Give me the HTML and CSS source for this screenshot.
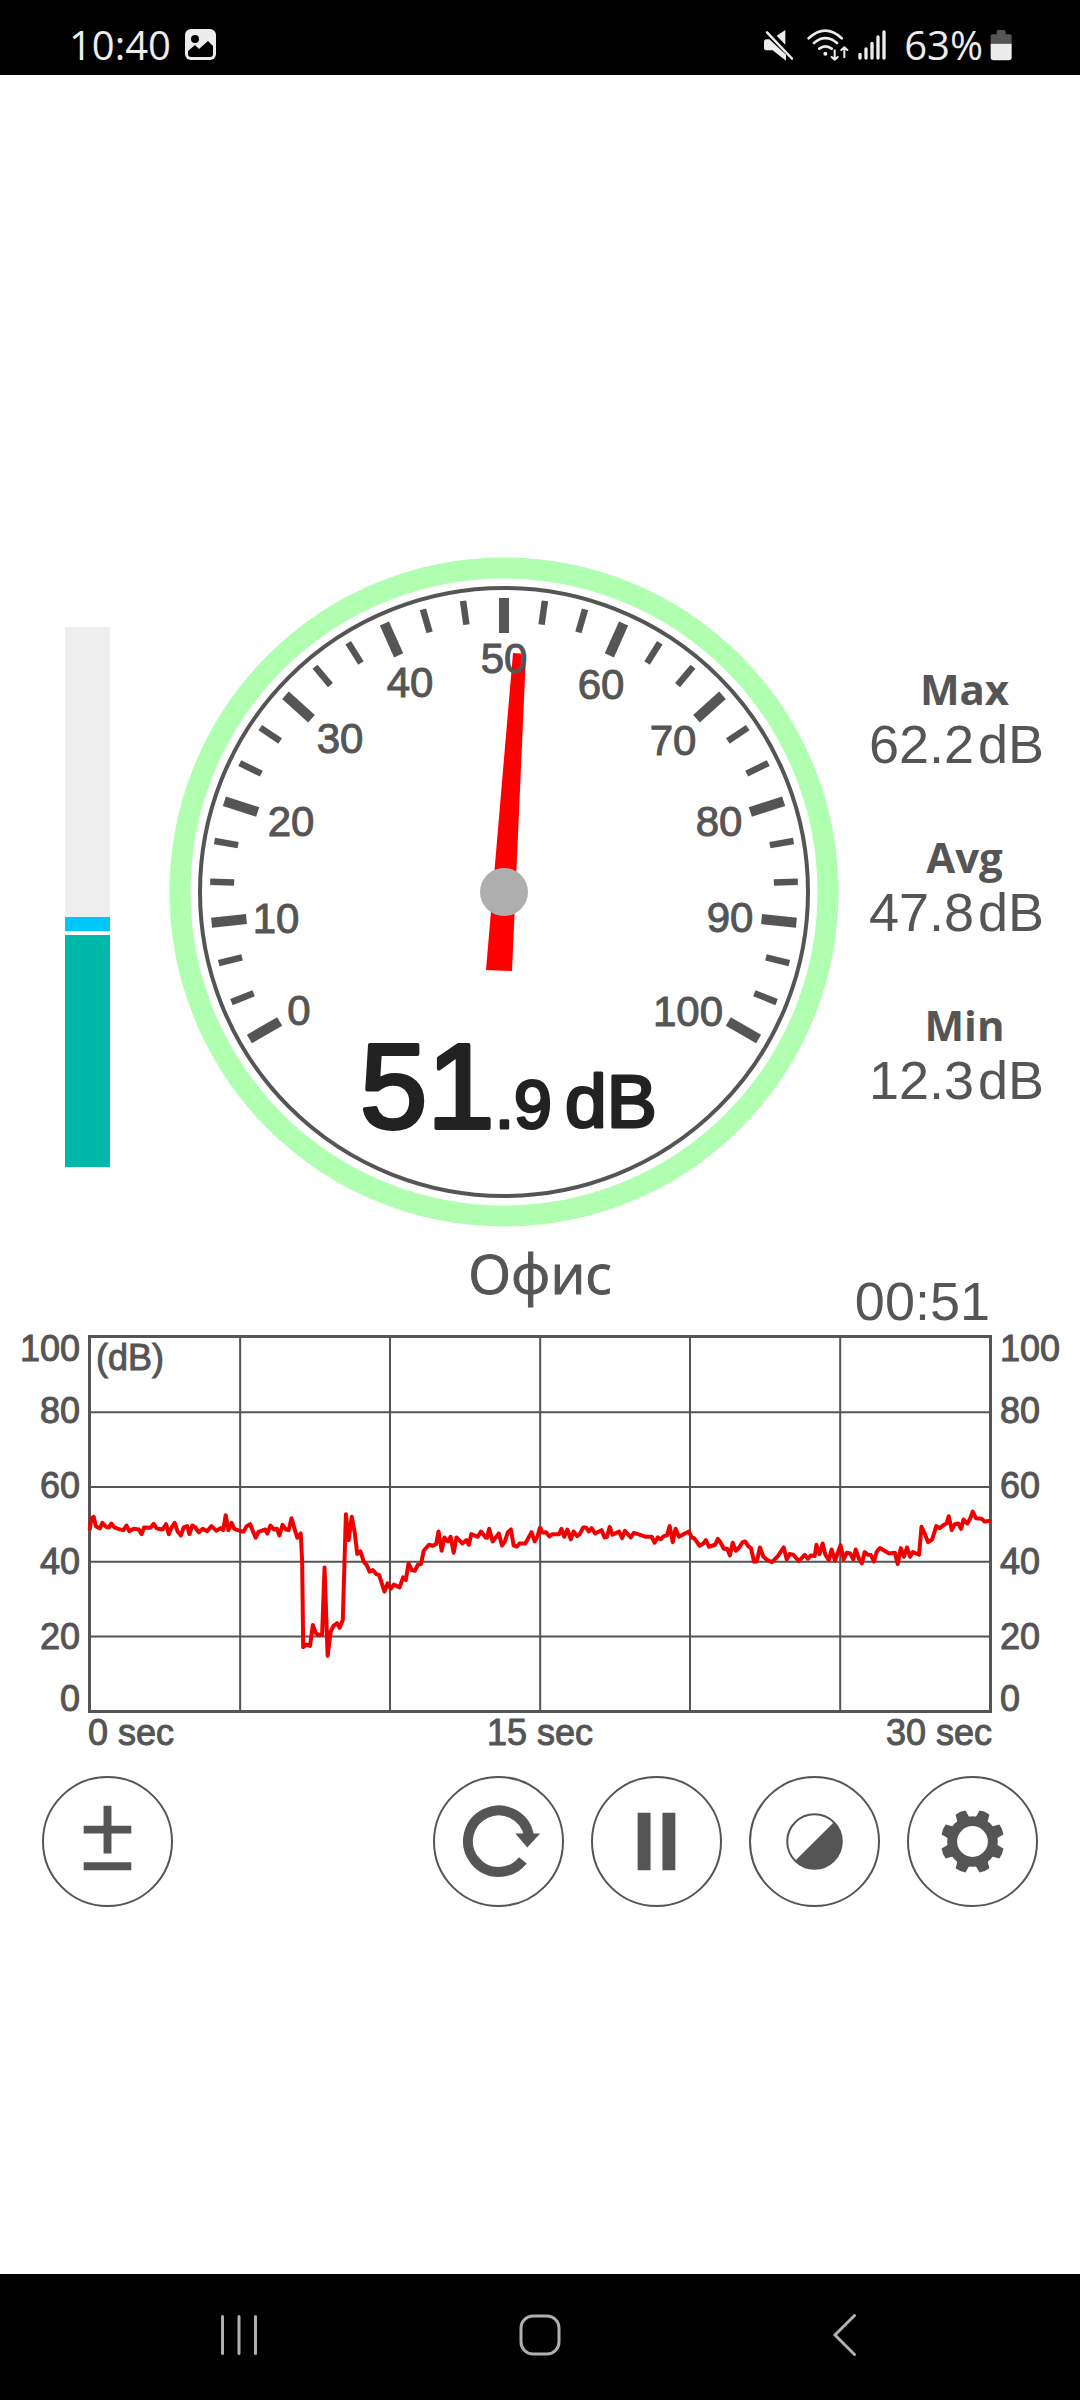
FILE: index.html
```html
<!DOCTYPE html>
<html lang="ru">
<head>
  <meta charset="UTF-8">
  <meta name="viewport" content="width=device-width, initial-scale=1.0">
  <title>Sound Meter</title>
  <link rel="stylesheet" href="styles.css">
</head>
<body>
  <header class="status-bar">
    <div class="status-left">
      <span>10:40</span>
      <svg width="31" height="32" viewBox="0 0 31 32">
        <rect width="31" height="31" rx="6" fill="#ececec"/>
        <circle cx="10" cy="10" r="4"/>
        <path d="M3 22l7-6 4 4 9-8 5 5v8q0 3-3 3H6q-3 0-3-3z"/>
      </svg>
    </div>
    <div class="status-right">
      <!-- sound off -->
      <svg width="30" height="32" viewBox="192 88 90 96" fill="#ececec">
        <path d="M230 108L256 91V135zM200 119H208L258 165V183L218 152H200Q192 152 192 145V127Q192 119 200 119z"/>
        <path d="M201 98L276 177" stroke="#ececec" stroke-width="7" stroke-linecap="round"/>
      </svg>
      <!-- wifi -->
      <svg class="icon-wifi" width="42" height="32" viewBox="320 88 126 96" fill="none" stroke="#ececec" stroke-width="8" stroke-linecap="round" stroke-linejoin="round">
        <path d="M325 116Q375 70 424 116M341 130Q375 101 410 130M357 147Q375 133 394 147"/>
        <path d="M403 152V180M394 172L403 180L412 172M432 173V143M423 151L432 143L441 151" stroke-width="6"/>
        <circle cx="375" cy="162" r="6" fill="#ececec" stroke="none"/>
      </svg>
      <!-- signal -->
      <svg class="icon-signal" width="28" height="32" viewBox="474 88 84 96" stroke="#ececec" stroke-width="10" stroke-linecap="round">
        <path d="M480 164V175M498 148V175M516 131V175M534 112V175M552 97V175"/>
      </svg>
      <span>63%</span>
      <svg class="icon-battery" width="22" height="32" viewBox="868 88 66 96">
        <path d="M888 104V96Q888 91 893 91H910Q915 91 915 96V104H928Q933 104 933 109V132H870V109Q870 104 875 104z" fill="#555"/>
        <path d="M870 132H933V173Q933 182 924 182H879Q870 182 870 173z" fill="#ececec"/>
      </svg>
    </div>
  </header>

  <main class="app">
    <section class="meter">
      <div class="level">
        <div class="level-peak"></div>
        <div class="level-fill"></div>
      </div>

      <svg class="gauge" viewBox="169 557 670 670">
        <circle cx="504" cy="892" r="324" fill="none" stroke="#b0ffb0" stroke-width="21"/>
        <circle cx="504" cy="892" r="304" fill="none" stroke="#555" stroke-width="4"/>
        <g id="ticks" stroke="#555"></g>
        <path d="M513 653L526 654L512 971L486 970z" fill="red"/>
        <circle cx="504" cy="892" r="24" fill="#aeaeae"/>
        <g class="gauge-numbers">
          <text x="299" y="1025">0</text>
          <text x="276" y="933">10</text>
          <text x="291" y="836">20</text>
          <text x="340" y="753">30</text>
          <text x="410" y="697">40</text>
          <text x="504" y="673">50</text>
          <text x="601" y="699">60</text>
          <text x="673" y="755">70</text>
          <text x="719" y="836">80</text>
          <text x="730" y="932">90</text>
          <text x="688" y="1026">100</text>
        </g>
        <g class="gauge-value">
          <text class="value-int" x="360" y="1128">51</text>
          <text class="value-frac" x="495" y="1128">.</text>
          <text class="value-frac" x="514" y="1128">9</text>
          <text class="value-unit" x="565" y="1127">dB</text>
        </g>
      </svg>

      <dl class="stats">
        <div class="stat">
          <dt>Max</dt>
          <dd>62.2<span>dB</span></dd>
        </div>
        <div class="stat">
          <dt>Avg</dt>
          <dd>47.8<span>dB</span></dd>
        </div>
        <div class="stat">
          <dt>Min</dt>
          <dd>12.3<span>dB</span></dd>
        </div>
      </dl>
    </section>

    <section class="caption">
      <h1>Офис</h1>
      <div class="timer">00:51</div>
    </section>

    <section class="chart">
      <div class="y-axis y-left">
        <span>100</span><span>80</span><span>60</span><span>40</span><span>20</span><span>0</span>
      </div>
      <div class="plot">
        <span class="plot-unit">(dB)</span>
        <svg viewBox="264 292 2607 1119" preserveAspectRatio="none">
          <path class="grid" d="M697 288V1416M1132 288V1416M1568 288V1416M2003 288V1416M2439 288V1416M260 515H2876M260 740H2876M260 965H2876M260 1190H2876"/>
          <!-- 0 - 15 sec -->
          <polyline class="trace" points="260,870 265,835 272,830 278,858 290,865 297,848 308,860 316,862 323,850 332,862 345,867 358,870 367,856 375,873 388,866 403,868 411,882 418,862 437,863 446,851 455,865 472,868 482,852 490,882 498,862 507,848 515,873 525,886 533,862 543,858 550,882 558,856 567,862 577,877 588,866 601,873 614,858 628,872 640,864 648,870 655,825 663,870 672,848 680,866 690,870 707,875 716,858 726,852 733,870 742,893 750,875 770,868 776,880 785,856 795,868 804,866 811,886 820,854 830,868 838,870 846,834 855,866 863,893 873,880 877,965 880,1222 890,1214 900,1218 908,1155 917,1180 927,1186 935,1184 942,982 951,1248 960,1175 968,1158 978,1150 986,1164 995,1140 1004,822 1012,900 1021,830 1030,880 1037,942 1046,934 1056,965 1065,976 1073,995 1082,990 1093,1003 1100,1004 1116,1055 1125,1030 1134,1046 1143,1034 1160,1042 1170,1012 1178,1020 1186,970 1195,990 1204,992 1213,974 1222,972 1230,932 1245,914 1256,917 1266,912 1273,874 1282,932 1290,892 1300,904 1308,890 1317,938 1325,892 1342,910 1354,900 1361,914 1368,882 1387,890 1396,874 1410,892 1414,893 1420,866 1430,904 1448,880 1457,916 1465,905 1474,877 1483,868 1491,916 1500,920 1508,910 1525,910 1543,876 1552,904 1560,890 1568,860"/>
          <!-- 15 - 30 sec -->
          <g transform="translate(1568)">
            <polyline class="trace" points="0,860 5,877 17,876 27,889 36,882 55,882 62,866 70,890 79,868 89,898 97,874 107,888 115,882 125,862 133,862 141,874 149,864 160,880 178,870 187,892 194,890 202,860 210,884 229,874 238,894 246,872 263,892 272,878 290,884 307,890 324,890 332,908 341,892 349,898 359,888 368,886 376,858 385,906 393,866 403,890 420,880 432,874 440,892 447,894 463,917 474,910 481,900 490,920 508,914 516,896 525,910 533,926 543,926 551,946 559,908 568,932 578,922 588,906 595,904 604,918 612,924 621,965 629,964 638,922 648,950 660,960 673,966 690,948 707,922 716,958 724,942 735,944 751,963 768,944 777,956 786,946 797,948 802,914 811,942 820,910 828,944 838,960 846,928 856,962 872,915 881,958 890,938 900,940 909,958 916,928 925,955 934,970 942,936 951,944 960,945 969,964 977,935 986,924 1000,932 1012,940 1030,938 1038,972 1047,924 1056,950 1065,922 1074,950 1082,936 1100,944 1107,860 1117,882 1126,906 1138,898 1150,858 1160,864 1172,854 1180,850 1186,828 1195,870 1204,852 1214,850 1222,866 1229,838 1240,850 1248,836 1256,814 1265,834 1282,836 1290,844 1308,842"/>
          </g>
        </svg>
      </div>
      <div class="y-axis y-right">
        <span>100</span><span>80</span><span>60</span><span>40</span><span>20</span><span>0</span>
      </div>
      <div class="x-axis">
        <span>0 sec</span><span>15 sec</span><span>30 sec</span>
      </div>
    </section>

    <section class="controls">
      <button type="button" class="round-btn calibrate" aria-label="Calibrate">
        <svg viewBox="-64 -64 128 128"><path d="M-4-36H4V-16H24V-8H4V12H-4V-8H-24V-16H-4zM-24 21H24V29H-24z"/></svg>
      </button>
      <button type="button" class="round-btn" aria-label="Reset">
        <svg viewBox="-64 -64 128 128">
          <path d="M24.500 19A31 31 0 1 1 30.500-7" fill="none" stroke="#555" stroke-width="10"/>
          <path d="M17-8H42L29 6z"/>
        </svg>
      </button>
      <button type="button" class="round-btn" aria-label="Pause">
        <svg viewBox="-64 -64 128 128"><path d="M-19-29H-6V29H-19zM6-29H19V29H6z"/></svg>
      </button>
      <button type="button" class="round-btn" aria-label="Theme">
        <svg viewBox="-64 -64 128 128">
          <circle r="27.500" fill="none" stroke="#555" stroke-width="2"/>
          <path d="M20-20A28.300 28.300 0 0 1-20 20z"/>
        </svg>
      </button>
      <button type="button" class="round-btn" aria-label="Settings">
        <svg viewBox="-64 -64 128 128">
          <circle r="20.500" fill="none" stroke="#555" stroke-width="10"/>
          <g id="teeth"></g>
        </svg>
      </button>
    </section>
  </main>

  <nav class="nav-bar">
    <button type="button" aria-label="Recents">
      <svg width="60" height="60" viewBox="-30 -30 60 60"><path d="M-16.500-18.500V18.500M0-18.500V18.500M16.500-18.500V18.500"/></svg>
    </button>
    <button type="button" aria-label="Home">
      <svg width="60" height="60" viewBox="-30 -30 60 60"><rect x="-19" y="-19" width="38" height="38" rx="12"/></svg>
    </button>
    <button type="button" aria-label="Back">
      <svg width="60" height="60" viewBox="-30 -30 60 60"><path d="M13.500-19.500L-6 0L13.500 19.500"/></svg>
    </button>
  </nav>

  <script>
    const svgNS = 'http://www.w3.org/2000/svg';

    // Scale: 0 dB at -120deg, 100 dB at 120deg, long mark every 10 dB
    const ticks = document.getElementById('ticks');
    for (let i = 0; i <= 30; i++) {
      const major = i % 3 === 0;
      const line = document.createElementNS(svgNS, 'line');
      line.setAttribute('x1', 504);
      line.setAttribute('x2', 504);
      line.setAttribute('y1', 598);
      line.setAttribute('y2', major ? 633 : 622);
      line.setAttribute('stroke-width', major ? 10 : 6.5);
      line.setAttribute('transform', `rotate(${i * 8 - 120} 504 892)`);
      ticks.appendChild(line);
    }

    // Gear teeth
    const teeth = document.getElementById('teeth');
    for (let i = 0; i < 8; i++) {
      const tooth = document.createElementNS(svgNS, 'path');
      tooth.setAttribute('d', 'M-6.500-23L-5.400-31.500Q0-33 5.400-31.500L6.500-23z');
      tooth.setAttribute('transform', `rotate(${i * 45 + 22.5})`);
      teeth.appendChild(tooth);
    }
  </script>
</body>
</html>
```
FILE: styles.css
```css
* { box-sizing: border-box; }
body {
  margin: 0;
  min-height: 100vh;
  display: flex;
  flex-direction: column;
  background: #fff;
  color: #555;
  font-family: "Liberation Sans", Arial, sans-serif;
}
svg { display: block; }
button { padding: 0; background: none; border: none; cursor: pointer; }

/* status bar */
.status-bar {
  display: flex;
  justify-content: space-between;
  height: 75px;
  padding: 15px 68px 0 69px;
  background: #000;
  color: #ececec;
  font-family: "Open Sans", "Noto Sans", sans-serif;
  font-size: 40px;
  line-height: 60px;
}
.status-left, .status-right { display: flex; align-items: center; }
.status-left { gap: 14px; }
.icon-wifi { margin-left: 13px; }
.icon-signal { margin: 0 18px 0 9px; }
.icon-battery { margin-left: 7px; }

.app { flex: 1; padding-top: 482px; }

/* gauge row */
.meter { display: flex; align-items: center; padding-right: 6px; }
.level {
  display: flex;
  flex-direction: column;
  justify-content: flex-end;
  flex: none;
  width: 45px;
  height: 540px;
  margin: 10px 59px 0 65px;
  background: #eee;
}
.level-peak { height: 18px; background: #00c8ff; border-bottom: 4px solid #fff; }
.level-fill { height: 232px; background: #00b8a9; }
.gauge { flex: 0 0 670px; width: 670px; }
.gauge-numbers {
  font-size: 42px;
  text-anchor: middle;
  fill: #555;
  stroke: #555;
  stroke-width: 1px;
}
.gauge-value { fill: #222; stroke: #222; stroke-width: 3px; stroke-linejoin: round; }
.value-int { font-size: 121px; stroke-width: 4px; }
.value-frac { font-size: 68px; }
.value-unit { font-size: 75px; }

.stats {
  flex: 1;
  display: flex;
  flex-direction: column;
  gap: 58px;
  margin: 0;
  padding-bottom: 16px;
  text-align: center;
}
.stat dt {
  padding-left: 16px;
  font-family: "Open Sans", "Noto Sans", sans-serif;
  font-size: 42px;
  font-weight: 700;
  line-height: 56px;
}
.stat dd { margin: 0; font-size: 54px; line-height: 54px; }
.stat span { margin-left: 4px; }

/* place name and timer */
.caption {
  display: grid;
  grid-template-columns: 1fr auto 1fr;
  min-height: 108px;
  padding: 8px 90px 4px;
}
.caption h1 {
  grid-column: 2;
  margin: 0;
  font-family: "Open Sans", "Noto Sans", sans-serif;
  font-size: 55px;
  font-weight: 500;
  line-height: 76px;
  -webkit-text-stroke: 1px #555;
}
.timer { align-self: end; text-align: right; font-size: 54px; line-height: 60px; }

/* history chart */
.chart {
  display: grid;
  grid-template-columns: 88px 1fr 88px;
  font-size: 36px;
  -webkit-text-stroke: 1px #555;
}
.plot { position: relative; height: 378px; border: 3px solid #555; }
.plot svg { width: 100%; height: 100%; overflow: visible; }
.plot-unit { position: absolute; top: 0; left: 5px; line-height: 40px; }
.grid, .trace { fill: none; vector-effect: non-scaling-stroke; }
.grid { stroke: #555; stroke-width: 2px; }
.trace { stroke: #f00000; stroke-width: 4px; stroke-linejoin: round; }
.y-axis { display: flex; flex-direction: column; line-height: 28px; }
.y-axis span { display: flex; flex: 2; align-items: center; }
.y-axis span:first-child { flex: 1; align-items: flex-start; }
.y-axis span:last-child { flex: 1; align-items: flex-end; }
.y-left { padding-right: 8px; }
.y-left span { justify-content: flex-end; }
.y-right { padding-left: 8px; }
.x-axis {
  grid-column: 2;
  display: grid;
  grid-template-columns: 1fr auto 1fr;
  line-height: 40px;
}
.x-axis span:last-child { text-align: right; }

/* buttons */
.controls { display: flex; gap: 27px; padding: 23px 42px 0; }
.round-btn {
  width: 131px;
  height: 131px;
  border: 2px solid #555;
  border-radius: 50%;
}
.round-btn svg { width: 100%; fill: #555; }
.calibrate { margin-right: auto; }

.nav-bar {
  display: flex;
  height: 126px;
  padding: 0 88px 4px;
  background: #000;
}
.nav-bar button { flex: 1; display: flex; align-items: center; justify-content: center; }
.nav-bar svg {
  fill: none;
  stroke: #b0b0b0;
  stroke-width: 3px;
  stroke-linecap: round;
}
```
